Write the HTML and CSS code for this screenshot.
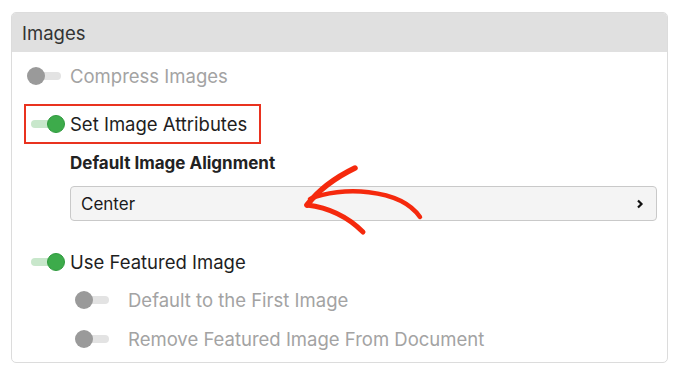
FILE: index.html
```html
<!DOCTYPE html>
<html>
<head>
<meta charset="utf-8">
<link rel="stylesheet" href="styles.css">
</head>
<body>
<div class="card">
  <div class="card-head">Images</div>
  <div class="card-body">
    <div class="row row-first">
      <span class="toggle"><span class="knob"></span></span>
      <span class="label muted">Compress Images</span>
    </div>
    <div class="highlight">
      <div class="row">
        <span class="toggle on"><span class="knob"></span></span>
        <span class="label">Set Image Attributes</span>
      </div>
    </div>
    <div class="field">
      <div class="field-label">Default Image Alignment</div>
      <div class="select">
        <span>Center</span>
        <svg class="chev" width="8" height="10" viewBox="0 0 8 10"><polyline points="2,1.5 5.5,5 2,8.5" fill="none" stroke="#111" stroke-width="2.2"/></svg>
      </div>
    </div>
    <div class="row row-featured">
      <span class="toggle on"><span class="knob"></span></span>
      <span class="label">Use Featured Image</span>
    </div>
    <div class="sub">
      <div class="row sub-row">
        <span class="toggle"><span class="knob"></span></span>
        <span class="label muted">Default to the First Image</span>
      </div>
      <div class="row sub-row sub-row-2">
        <span class="toggle"><span class="knob"></span></span>
        <span class="label muted">Remove Featured Image From Document</span>
      </div>
    </div>
  </div>
</div>
<svg class="arrow" width="680" height="380" viewBox="0 0 680 380">
  <g fill="none" stroke="#f5290d" stroke-linecap="round" stroke-linejoin="round">
    <path d="M307 205 Q 324 183 355 168" stroke-width="5.5"/>
    <path d="M307 205 Q 340 209 363 232" stroke-width="5"/>
    <path d="M310 199 C 340 186, 400 188, 420 217" stroke-width="4.5"/>
  </g>
</svg>
</body>
</html>
```

FILE: styles.css
```css
html, body {
  margin: 0;
  padding: 0;
  background: #ffffff;
}
body {
  position: relative;
  width: 680px;
  height: 380px;
  font-family: Inter, "Liberation Sans", Arial, sans-serif;
  color: #222;
}
.card {
  margin: 12px 0 0 11px;
  width: 657px;
  height: 351px;
  box-sizing: border-box;
  border: 1px solid #dcdcdc;
  border-radius: 5px;
  overflow: hidden;
}
.card-head {
  height: 39px;
  background: #e0e0e0;
  padding-left: 10px;
  display: flex;
  align-items: center;
  font-size: 18.5px;
  color: #333;
}
.card-body {
  padding: 12px 10px 0 15px;
}
.row {
  display: flex;
  align-items: center;
  height: 24px;
  gap: 5px;
}
.label {
  font-size: 18.5px;
  color: #1e1e1e;
  white-space: nowrap;
}
.label.muted {
  color: #a3a3a3;
}
.toggle {
  position: relative;
  width: 38px;
  height: 18px;
  flex: none;
}
.toggle::before {
  content: "";
  position: absolute;
  left: 4px;
  right: 4px;
  top: 5px;
  height: 8px;
  border-radius: 4px;
  background: #e3e3e3;
}
.knob {
  position: absolute;
  left: 0;
  top: 0;
  width: 18px;
  height: 18px;
  border-radius: 50%;
  background: #9a9a9a;
}
.toggle.on::before {
  background: #c8e7cb;
}
.toggle.on .knob {
  left: auto;
  right: 0;
  background: #3dab4b;
  box-sizing: border-box;
  border: 1px solid #2f9a3e;
}
.highlight {
  margin: 16px 0 0 -3px;
  display: inline-flex;
  border: 2px solid #e9321f;
  padding: 6px 12px 6px 1px;
}
.field {
  margin-left: 43px;
  margin-right: 0;
}
.field-label {
  margin-top: 10px;
  height: 18px;
  line-height: 18px;
  font-size: 17px;
  font-weight: 700;
  color: #222;
}
.select {
  margin-top: 14px;
  height: 35px;
  box-sizing: border-box;
  border: 1px solid #c9c9c9;
  border-radius: 4px;
  background: #f4f4f4;
  display: flex;
  align-items: center;
  justify-content: space-between;
  padding: 0 12px 0 10px;
  font-size: 17px;
  color: #1a1a1a;
}
.chev {
  display: block;
}
.row-featured {
  margin-top: 29px;
}
.sub {
  padding-left: 48px;
}
.sub-row {
  margin-top: 14px;
  gap: 15px;
}
.sub-row-2 {
  margin-top: 15px;
}
.arrow {
  position: absolute;
  left: 0;
  top: 0;
  pointer-events: none;
}
```
